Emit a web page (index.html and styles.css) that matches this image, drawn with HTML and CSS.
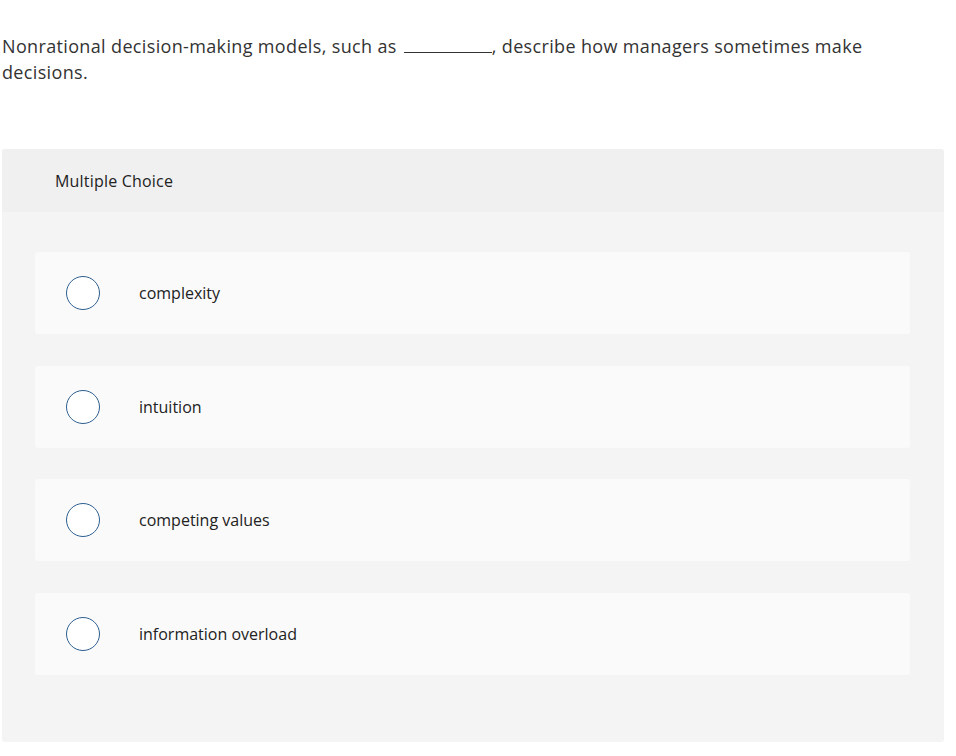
FILE: index.html
```html
<!DOCTYPE html>
<html>
    <head>
        <title>Multiple Choice</title>
        <link rel="stylesheet" href="styles.css">
    </head>
    <body>
        <div class="question">
            <p class="prompt">Nonrational decision-making models, such as <span class="blank"></span>, describe how managers sometimes make decisions.</p>

            <div class="choices">
                <div class="choices-head">Multiple Choice</div>
                <div class="choices-body">
                    <label class="option">
                        <span class="radio"></span>
                        <span class="option-text">complexity</span>
                    </label>
                    <label class="option">
                        <span class="radio"></span>
                        <span class="option-text">intuition</span>
                    </label>
                    <label class="option">
                        <span class="radio"></span>
                        <span class="option-text">competing values</span>
                    </label>
                    <label class="option">
                        <span class="radio"></span>
                        <span class="option-text">information overload</span>
                    </label>
                </div>
            </div>
        </div>
    </body>
</html>
```

FILE: styles.css
```css
body {
    margin:0;
    padding:0;
    background-color:#FFF;
    font-family:"Open Sans", Lato, sans-serif;
    color:#333;
}

.question {
    padding:33px 12px 0px 2px;
}

.prompt {
    margin:0px;
    font-size:18px;
    line-height:26px;
    letter-spacing:0.35px;
    width:872px;
}

.blank {
    display:inline-block;
    width:88px;
    height:1px;
    border-bottom:1px solid #333;
    margin-left:2px;
}

.choices {
    margin-top:64px;
    width:942px;
    border-radius:3px;
    overflow:hidden;
    background-color:#F4F4F4;
}

.choices-head {
    background-color:#F0F0F0;
    height:63px;
    padding-left:53px;
    display:flex;
    align-items:center;
    font-size:16px;
    letter-spacing:0.2px;
    color:#222;
}

.choices-body {
    padding:40px 34px 67px 33px;
    display:flex;
    flex-direction:column;
    gap:31.5px;
}

.option {
    background-color:#FAFAFA;
    border-radius:3px;
    height:82px;
    display:flex;
    align-items:center;
    padding-left:31px;
    cursor:pointer;
}

.radio {
    width:32px;
    height:32px;
    border:1.5px solid #2D5F91;
    border-radius:50%;
    background-color:#FFF;
    flex:none;
}

.option-text {
    margin-left:39px;
    font-size:16px;
    color:#222;
}
```
